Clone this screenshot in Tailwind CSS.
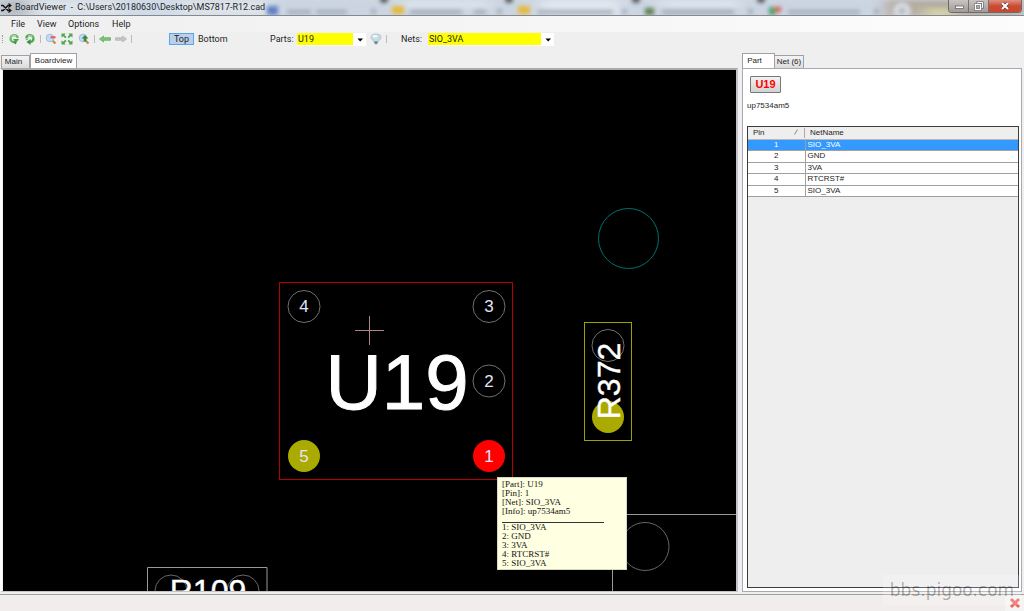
<!DOCTYPE html>
<html lang="en">
<head>
<meta charset="utf-8">
<title>BoardViewer</title>
<script src="https://cdn.jsdelivr.net/npm/@tailwindcss/browser@4"></script>
</head>
<body class="flex h-screen flex-col overflow-hidden bg-[#efefef] font-['Roboto',sans-serif] text-[9px] leading-none text-[#1e1e1e]">

<header class="relative flex h-4 shrink-0 items-center overflow-hidden border-b border-[#85888c] bg-[#cfd6e0]">
  <svg class="absolute inset-0 h-full w-full" aria-hidden="true">
    <defs><filter id="b" x="-20%" y="-100%" width="140%" height="300%"><feGaussianBlur stdDeviation="2"/></filter>
    <filter id="w" x="-20%" y="-100%" width="140%" height="300%"><feGaussianBlur stdDeviation="8 2"/></filter></defs>
    <g filter="url(#w)">
      <rect x="0" y="0" width="270" height="16" fill="#dde3ea"/>
      <rect x="0" y="0" width="30" height="16" fill="#b6bdc4"/>
      <rect x="120" y="0" width="60" height="16" fill="#d0dcea"/>
      <rect x="270" y="0" width="610" height="16" fill="#cbd5e2"/>
      <rect x="400" y="0" width="90" height="9" fill="#d9e1ea"/>
      <rect x="540" y="0" width="80" height="16" fill="#e0e7ef"/>
      <rect x="660" y="0" width="80" height="8" fill="#dbe3ec"/>
      <rect x="885" y="0" width="139" height="16" fill="#b5aca3"/>
      <rect x="925" y="8" width="30" height="8" fill="#d3d0a4"/>
    </g>
    <g filter="url(#b)">
      <rect x="267" y="6" width="11" height="9" fill="#5b7fc4"/>
      <rect x="392" y="6" width="12" height="8" fill="#e6b93a"/>
      <rect x="518" y="6" width="12" height="8" fill="#e6b93a"/>
      <rect x="645" y="8" width="9" height="7" fill="#5c7f48"/>
      <rect x="769" y="7" width="7" height="8" fill="#3f9f6c"/>
      <rect x="775" y="7" width="6" height="5" fill="#dc5146"/>
      <g fill="#a3acb8">
        <rect x="287" y="10" width="24" height="4"/><rect x="316" y="10" width="31" height="4"/>
        <rect x="410" y="10" width="52" height="4"/><rect x="474" y="10" width="12" height="4"/>
        <rect x="537" y="10" width="76" height="4"/><rect x="662" y="10" width="72" height="4"/>
        <rect x="788" y="10" width="72" height="4"/><rect x="371" y="9" width="5" height="5"/>
        <rect x="497" y="9" width="5" height="5"/><rect x="622" y="9" width="5" height="5"/>
        <rect x="748" y="9" width="5" height="5"/><rect x="874" y="9" width="5" height="5"/>
      </g>
      <circle cx="384" cy="-1" r="4" fill="#555"/><circle cx="509" cy="-1" r="4" fill="#555"/>
      <circle cx="636" cy="-1" r="4" fill="#555"/><circle cx="761" cy="-1" r="4" fill="#555"/>
      <circle cx="902" cy="11" r="9" fill="#d5dae2"/><circle cx="902" cy="11" r="2" fill="#777"/>
    </g>
  </svg>
  <svg class="relative ml-px h-3 w-3 shrink-0" viewBox="0 0 12 12" fill="none" stroke="#111" stroke-width="1.4" aria-hidden="true"><path d="M0 3.500h2l5 5h2M0 8.500h2l5-5h2"/><path d="M7.500 1.500l2.500 2-2.500 2M7.500 6.500l2.500 2-2.500 2" stroke-width="1.100"/></svg>
  <h1 class="relative ml-0.5 whitespace-pre text-[9px]">BoardViewer  -  C:\Users\20180630\Desktop\MS7817-R12.cad</h1>
  <div class="relative mr-0.5 ml-auto flex h-[13px] self-start overflow-hidden rounded-b border border-t-0 border-[#6d6a69]">
    <button aria-label="Minimize" class="flex w-5 items-center justify-center border-r border-[#77706e] bg-linear-to-b from-[#c9c4c2] to-[#a09b99]"><svg class="h-3 w-3" viewBox="0 0 12 12"><rect x="2.500" y="6" width="8" height="2.500" fill="#fff" stroke="#555" stroke-width=".7"/></svg></button>
    <button aria-label="Restore" class="flex w-5 items-center justify-center border-r border-[#77706e] bg-linear-to-b from-[#c9c4c2] to-[#a09b99]"><svg class="h-3 w-3" viewBox="0 0 12 12" fill="none"><path d="M4.500 4V2.500h5v5H8" stroke="#555" stroke-width="2"/><path d="M4.500 4V2.500h5v5H8" stroke="#fff"/><rect x="2.500" y="4.500" width="5" height="5" stroke="#555" stroke-width="2.200"/><rect x="2.500" y="4.500" width="5" height="5" stroke="#fff" stroke-width="1.300"/></svg></button>
    <button aria-label="Close" class="flex w-8 items-center justify-center bg-linear-to-b from-[#dd9082] via-[#cc4a34] to-[#c64a2e]"><svg class="h-3 w-3" viewBox="0 0 12 12"><path d="M3 3l6 6M9 3l-6 6" stroke="#6b3a38" stroke-width="3.200"/><path d="M3 3l6 6M9 3l-6 6" stroke="#fff" stroke-width="2"/></svg></button>
  </div>
</header>

<nav class="flex h-4 shrink-0 items-center bg-linear-to-r from-[#efefef] to-[#fcfcfc] pl-[11px]">
  <button class="w-[26px] text-left">File</button>
  <button class="w-[31px] text-left">View</button>
  <button class="w-[44px] text-left">Options</button>
  <button class="text-left">Help</button>
</nav>

<div class="flex h-[14px] shrink-0 items-center pl-0.5" role="toolbar">
  <span class="h-2 w-px border-l border-dotted border-[#999]"></span>
  <button aria-label="Rotate left" class="ml-[5px] w-3"><svg class="h-3 w-3" viewBox="0 0 12 12"><path d="M9.800 5A3.700 3.700 0 0 0 2.500 5.500C2.500 7.500 4 9 6 9.200" fill="none" stroke="#6dbb69" stroke-width="2.200"/><path d="M10.500 5.500c0 2-.8 3-2.500 3.600V7.200L4.800 9.300 8 11.500v-.8" fill="#3a9340"/><path d="M5 6h6L8 9.500z" fill="#46a54b"/><path d="M3 4.500a3.500 3.500 0 0 1 5-1.500" fill="none" stroke="#b5e0b0"/></svg></button>
  <button aria-label="Rotate right" class="ml-1 w-3"><svg class="h-3 w-3" viewBox="0 0 12 12"><path d="M2.200 5A3.700 3.700 0 0 1 9.500 5.500C9.500 7.500 8 9 6 9.200" fill="none" stroke="#4fa94f" stroke-width="2.200"/><path d="M6.500 6v6L2.500 9z" fill="#3a9340"/><path d="M.8 5.500h4L3 7.500z" fill="#6dbb69"/><path d="M4 3a3.500 3.500 0 0 1 5 1.500" fill="none" stroke="#b5e0b0"/></svg></button>
  <span class="ml-1 h-2 w-px bg-[#bbb]"></span>
  <button aria-label="Zoom out" class="ml-1 w-3"><svg class="h-3 w-3" viewBox="0 0 12 12"><path d="M7.500 7.500l3 3" stroke="#c98a45" stroke-width="2.200"/><circle cx="5" cy="5" r="3.800" fill="#c2dbf6" stroke="#a3bce0"/><path d="M5.500 4.300h5" stroke="#e0605a" stroke-width="2.200"/></svg></button>
  <button aria-label="Fit to window" class="ml-1 w-3"><svg class="h-3 w-3" viewBox="0 0 12 12" fill="#4fa94c"><path d="M.5.500h4L3.500 2l2 2-1.300 1.300-2-2-1.700 1.200zM11.500.500h-4L8.500 2l-2 2 1.300 1.300 2-2 1.700 1.200zM.5 11.500h4l-1-1.500 2-2-1.300-1.300-2 2-1.700-1.200zM11.500 11.500h-4l1-1.500-2-2 1.300-1.300 2 2 1.700-1.200z"/></svg></button>
  <button aria-label="Zoom in" class="ml-[5px] w-3"><svg class="h-3 w-3" viewBox="0 0 12 12"><path d="M7.500 7.500l3 3" stroke="#c98a45" stroke-width="2.200"/><circle cx="5" cy="5" r="3.800" fill="#c2dbf6" stroke="#a3bce0"/><path d="M7 2l3.500 3.500H8.300v3H5.700v-3H3.500z" fill="#358b3a"/></svg></button>
  <span class="ml-1 h-2 w-px bg-[#bbb]"></span>
  <button aria-label="Back" class="ml-1 w-3"><svg class="h-3 w-3" viewBox="0 0 12 12"><path d="M.5 6l4-3v1.700h7v2.600h-7V9z" fill="#7cc777" stroke="#4d9e4f" stroke-width=".6"/></svg></button>
  <button aria-label="Forward" class="ml-1 w-3"><svg class="h-3 w-3" viewBox="0 0 12 12"><path d="M11.500 6l-4-3v1.700h-7v2.600h7V9z" fill="#c4c4c4" stroke="#aaa" stroke-width=".6"/></svg></button>
  <span class="ml-1 h-2 w-px bg-[#bbb]"></span>
  <button class="ml-[37px] h-3 w-[25px] border border-[#5ba3ea] bg-[#b9d0ea]">Top</button>
  <button class="ml-1 w-[31px] text-left">Bottom</button>
  <label for="parts" class="ml-[41px] w-[27px]">Parts:</label>
  <div class="flex h-[13px] w-[69px] bg-white pb-px">
    <input id="parts" value="U19" class="min-w-0 flex-1 bg-[#ffff00] pl-px outline-none">
    <button aria-label="Show parts" class="flex w-[13px] items-center justify-center"><svg class="h-2 w-2" viewBox="0 0 8 8"><path d="M1.500 3.500h5.500L4.200 6.500z"/></svg></button>
  </div>
  <button aria-label="Highlight" class="ml-1 w-3"><svg class="h-3 w-3" viewBox="0 0 12 12"><path d="M1 4.500C1 2 3 1 6 1s5 1 5 3.500C11 6.500 8.500 7 8 9H4C3.500 7 1 6.500 1 4.500z" fill="#c3dce6" stroke="#9aaeb8" stroke-width=".6"/><ellipse cx="5" cy="3.300" rx="2.700" ry="1.200" fill="#f3fafc"/><path d="M4.300 8.500h3.400v1.800L6 11.500l-1.700-1.200z" fill="#74828c"/></svg></button>
  <span class="ml-1 h-2 w-px bg-[#bbb]"></span>
  <label for="nets" class="ml-3.5 w-[27px]">Nets:</label>
  <div class="flex h-[13px] w-[126px] bg-white pb-px">
    <input id="nets" value="SIO_3VA" class="min-w-0 flex-1 bg-[#ffff00] pl-px outline-none">
    <button aria-label="Show nets" class="flex w-[13px] items-center justify-center"><svg class="h-2 w-2" viewBox="0 0 8 8"><path d="M1.500 3.500h5.500L4.200 6.500z"/></svg></button>
  </div>
</div>

<main class="flex min-h-0 flex-1 pt-[7px] pr-0.5 pb-0.5 font-['Liberation_Sans',sans-serif] text-[8px]">
  <section class="flex min-w-0 flex-1 flex-col">
    <div class="flex h-[15px] items-end pl-px" role="tablist">
      <button role="tab" class="h-[13px] w-[29px] border border-b-0 border-[#a0a0a6] bg-linear-to-b from-[#f3f3f3] to-[#dcdcdc] pr-1">Main</button>
      <button role="tab" aria-selected="true" class="h-[15px] w-[47px] border border-b-0 border-[#a0a0a6] bg-white">Boardview</button>
    </div>
    <div class="min-h-0 flex-1 border-2 border-b border-[#a9a9ae] border-r-[#c4c4cc] border-b-[#c4c4c8] border-l-white pl-px">
      <div class="relative h-full overflow-hidden bg-black">
        <svg class="absolute inset-0 h-full w-full font-['Liberation_Sans',sans-serif]" role="img" aria-label="Board layout">
          <g transform="translate(-3 -70)" fill="none" text-anchor="middle">
            <circle cx="628.500" cy="238.500" r="30" stroke="#007070"/>
            <path d="M626 514.500H1600M612.500 514V1200" stroke="#999"/>
            <circle cx="645" cy="546.500" r="24" stroke="#666"/>

            <rect x="279.500" y="282.500" width="233" height="197" stroke="#b80000"/>
            <g stroke="#707070"><circle cx="304" cy="306.500" r="16"/><circle cx="489" cy="306.500" r="16"/><circle cx="489" cy="381" r="16"/></g>
            <circle cx="304" cy="456" r="16" fill="#aaaa00"/>
            <circle cx="489" cy="456" r="16" fill="#ff0000"/>
            <path d="M355 330.500h29M369.500 316v29" stroke="#b08484"/>
            <text x="397" y="409" font-size="78" fill="#fff" stroke="#fff">U19</text>
            <g font-size="17" fill="#e4e4f8">
              <text x="304" y="312">4</text><text x="489" y="312">3</text><text x="489" y="387">2</text>
              <text x="304" y="462">5</text><text x="489" y="462">1</text>
            </g>

            <rect x="584.500" y="322.500" width="47" height="118" stroke="#a0a000"/>
            <circle cx="608" cy="345.500" r="16" stroke="#707070"/>
            <circle cx="608" cy="417" r="16" fill="#aaaa00"/>
            <text transform="translate(620 381) rotate(-90)" font-size="32" fill="#fff" stroke="#fff" stroke-width=".4">R372</text>

            <path d="M147.500 640V567.500H267V640" stroke="#999"/>
            <circle cx="171" cy="591" r="16" stroke="#666"/><circle cx="243" cy="591" r="16" stroke="#666"/>
            <text x="208" y="602" font-size="32" fill="#fff" stroke="#fff" stroke-width=".4">R109</text>
          </g>
        </svg>
        <div role="tooltip" class="absolute top-[407px] left-[494px] h-[93px] w-[130px] border border-[#d8d8c0] bg-[#ffffe1] px-1 pt-0.5 font-['Liberation_Serif',serif] text-[9px] leading-[9px] text-[#111]">
          <p>[Part]: U19</p><p>[Pin]: 1</p><p>[Net]: SIO_3VA</p><p>[Info]: up7534am5</p>
          <hr class="mt-1.5 w-[102px] border-[#333]">
          <p>1: SIO_3VA</p><p>2: GND</p><p>3: 3VA</p><p>4: RTCRST#</p><p>5: SIO_3VA</p>
        </div>
      </div>
    </div>
  </section>

  <aside class="ml-1 flex w-[280px] shrink-0 flex-col">
    <div class="flex h-[15px] items-end" role="tablist">
      <button role="tab" aria-selected="true" class="h-[15px] w-[33px] border border-b-0 border-[#a0a0a6] bg-white pr-2">Part</button>
      <button role="tab" class="h-[13px] w-[29px] border border-b-0 border-l-0 border-[#a0a0a6] bg-linear-to-b from-[#f3f3f3] to-[#dcdcdc]">Net (6)</button>
    </div>
    <div class="flex min-h-0 flex-1 flex-col border border-[#a9a9b4] bg-white pt-[7px] pr-0.5 pb-[3px] pl-1">
      <button class="ml-[3px] h-[17px] w-[31px] shrink-0 rounded-[1px] border border-[#777] bg-linear-to-b from-[#f2f2f2] to-[#d2d2d2] text-[11px] font-bold text-[#ff0000]">U19</button>
      <p class="mt-[9px] h-6 shrink-0">up7534am5</p>
      <div class="min-h-0 flex-1 border border-[#3c3c3c] bg-[#eeeeee]">
        <table class="w-full table-fixed border-collapse text-left leading-[10px]">
          <thead><tr class="h-3 border-b border-[#b8b8b8]">
            <th class="w-[57px] p-0 pl-[5px] font-normal"><div class="flex justify-between border-r border-[#aaa] pr-1.5"><span>Pin</span><svg class="h-2 w-1" viewBox="0 0 4 8"><path d="M.5 6.500l3-5" stroke="#888" fill="none"/></svg></div></th>
            <th class="p-0 pl-[5px] font-normal">NetName</th>
          </tr></thead>
          <tbody>
            <tr class="h-[11px] border-b border-[#a0a0a0] bg-[#3399ff] text-white"><td class="border-r border-[#a0a0a0] p-0 text-center">1</td><td class="p-0 pl-0.5">SIO_3VA</td></tr>
            <tr class="h-[12px] border-b border-[#a0a0a0] bg-white"><td class="border-r border-[#a0a0a0] p-0 text-center">2</td><td class="p-0 pl-0.5">GND</td></tr>
            <tr class="h-[11px] border-b border-[#a0a0a0] bg-white"><td class="border-r border-[#a0a0a0] p-0 text-center">3</td><td class="p-0 pl-0.5">3VA</td></tr>
            <tr class="h-[12px] border-b border-[#a0a0a0] bg-white"><td class="border-r border-[#a0a0a0] p-0 text-center">4</td><td class="p-0 pl-0.5">RTCRST#</td></tr>
            <tr class="h-[11px] border-b border-[#a0a0a0] bg-white"><td class="border-r border-[#a0a0a0] p-0 text-center">5</td><td class="p-0 pl-0.5">SIO_3VA</td></tr>
          </tbody>
        </table>
      </div>
    </div>
  </aside>
</main>

<footer class="flex h-[17px] shrink-0 justify-end border-t border-[#a0a0a0] bg-[#f0edec]">
  <button aria-label="Dismiss" class="flex w-[19px] items-center justify-center bg-[#f5f4f4]"><svg class="h-3 w-3" viewBox="0 0 12 12"><path d="M2 2l8 8M10 2l-8 8" stroke="#ef6461" stroke-width="3"/></svg></button>
</footer>

<p class="absolute right-[3px] bottom-1.5 flex h-[30px] w-[138px] items-center justify-center bg-white/20 font-['DejaVu_Sans',sans-serif] text-[17px] text-black/30">bbs.pigoo.com</p>
</body>
</html>
